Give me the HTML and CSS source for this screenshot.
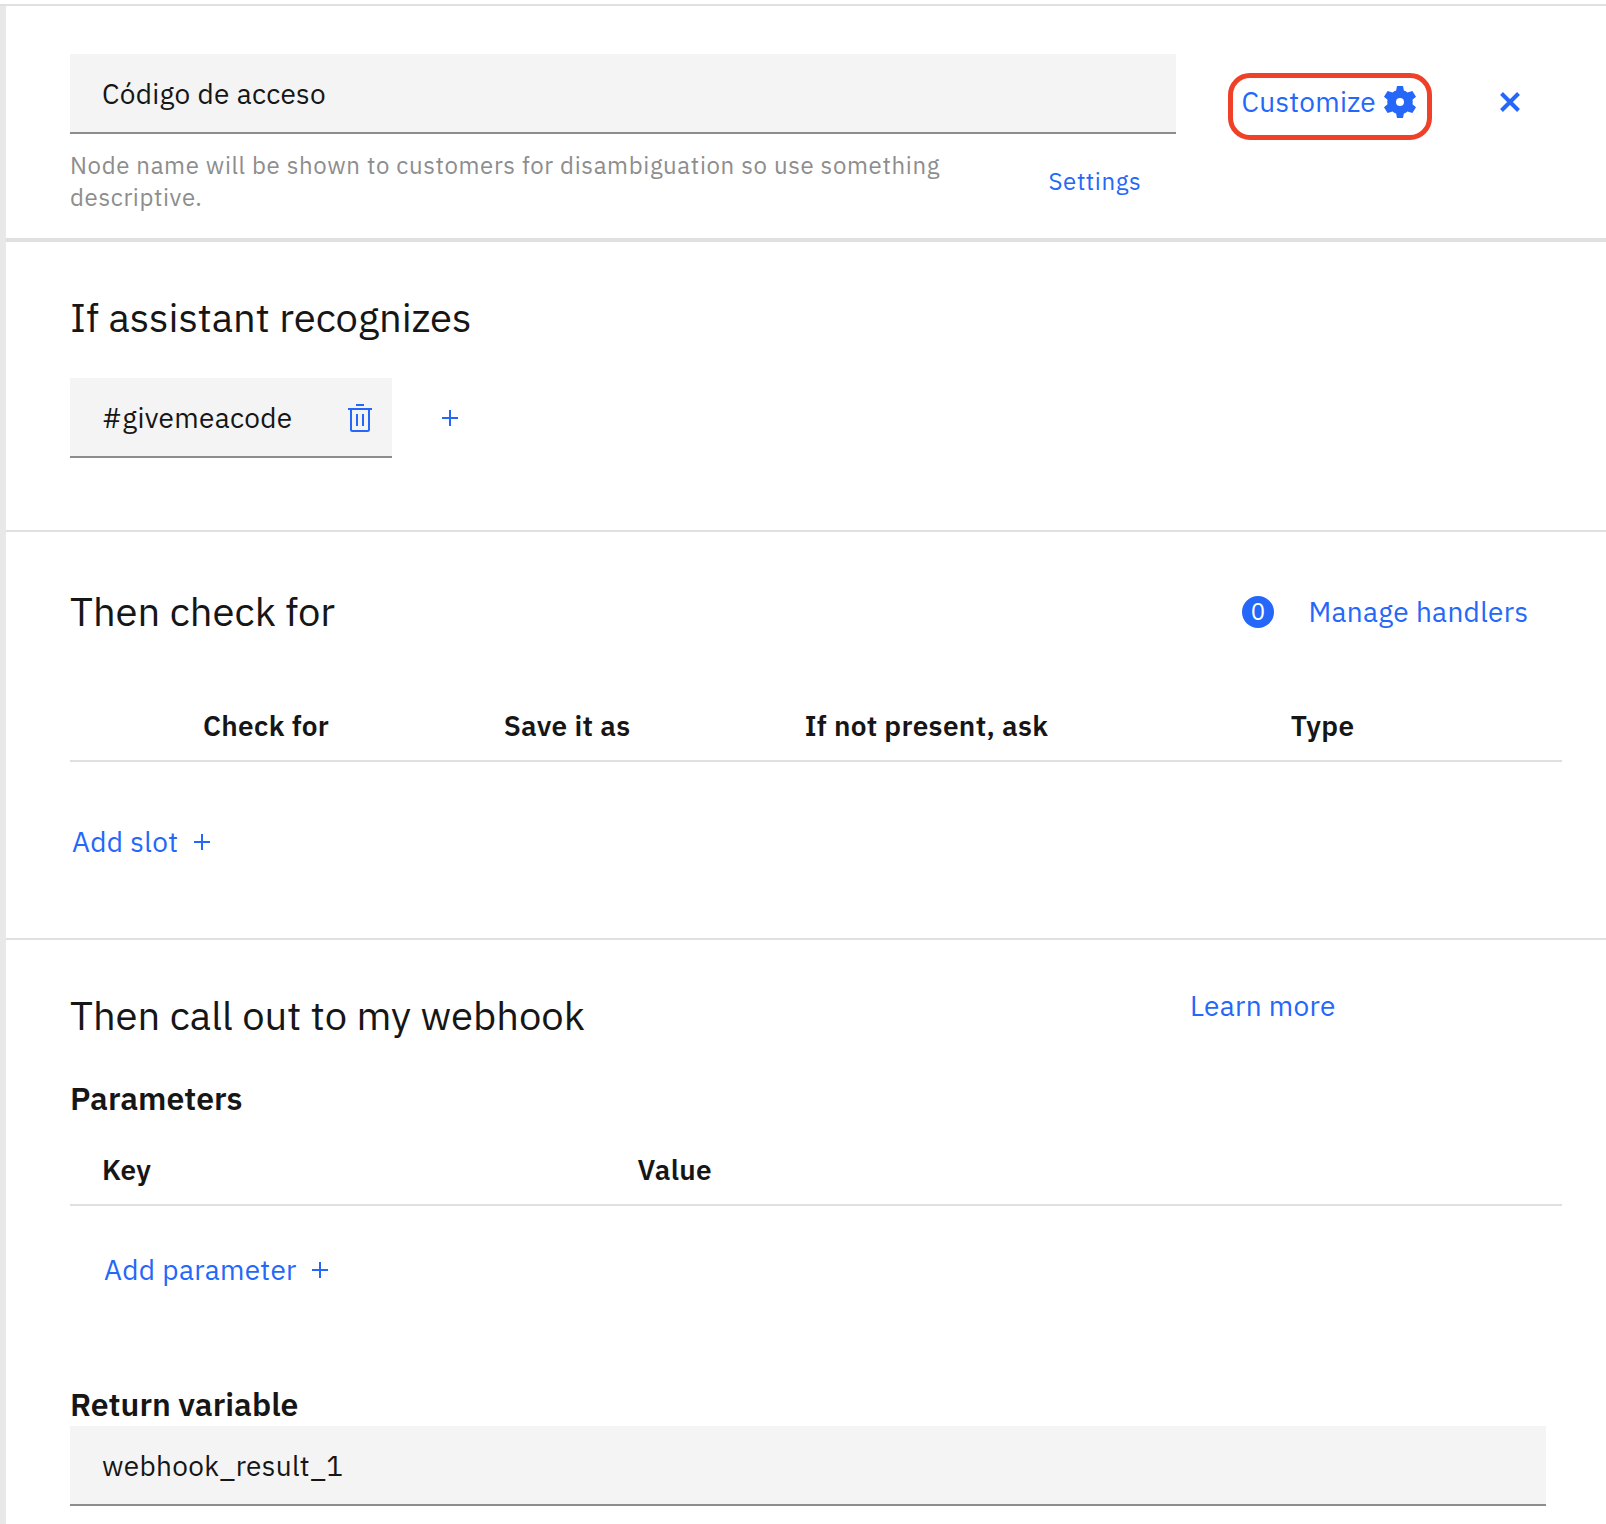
FILE: index.html
```
<!DOCTYPE html>
<html lang="es">
<head>
<meta charset="utf-8">
<title>Código de acceso</title>
<link rel="stylesheet" href="styles.css">
</head>
<body>
<div class="page">
<main class="panel">
  <header class="section node-header">
    <div class="name-column">
      <div class="field">Código de acceso</div>
      <div class="helper-row">
        <p class="helper">Node name will be shown to customers for disambiguation so use something descriptive.</p>
        <a class="settings">Settings</a>
      </div>
    </div>
    <div class="customize">
      <a class="link">Customize</a>
      <svg class="gear" viewBox="0 0 32 32" width="32" height="32"><path fill-rule="evenodd" d="M13 0h6l.9 4.600q2 .6 3.500 2l5-1.600L32 10.800l-3.500 3q.5 2.200 0 4.400l3.500 3L28.400 27l-5-1.600q-1.500 1.400-3.500 2L19 32h-6l-.9-4.600q-2-.6-3.500-2L3.600 27 0 21.200l3.500-3q-.5-2.200 0-4.400L0 10.800 3.600 5l5 1.600q1.500-1.400 3.500-2zM16 12a4 4 0 1 0 0 8 4 4 0 0 0 0-8z"/></svg>
    </div>
    <svg class="close" viewBox="0 0 20 20" width="20" height="20"><path d="M1.500 1.500l17 17M18.500 1.500l-17 17"/></svg>
  </header>

  <section class="section recognizes">
    <h2>If assistant recognizes</h2>
    <div class="conditions">
      <div class="field chip">
        <span>#givemeacode</span>
        <svg class="trash" viewBox="0 0 24 28" width="24" height="28"><path d="M8 0h8v2H8zM0 4h24v2H0zM8 10h2v12H8zM14 10h2v12h-2z"/><path class="can" d="M3 5v20.500Q3 27 4.500 27h15q1.500 0 1.500-1.500V5"/></svg>
      </div>
      <svg class="plus" viewBox="0 0 16 16" width="16" height="16"><path d="M7 0h2v7h7v2H9v7H7V9H0V7h7z"/></svg>
    </div>
  </section>

  <section class="section slots">
    <div class="title-row">
      <h2>Then check for</h2>
      <div class="handlers"><span class="count">0</span><a class="link manage">Manage handlers</a></div>
    </div>
    <div class="table-head slot-head">
      <span>Check for</span><span>Save it as</span><span>If not present, ask</span><span>Type</span>
    </div>
    <div class="add-row slot-add"><a class="link add-slot">Add slot</a><svg class="plus" viewBox="0 0 16 16" width="16" height="16"><path d="M7 0h2v7h7v2H9v7H7V9H0V7h7z"/></svg></div>
  </section>

  <section class="webhook">
    <div class="title-row">
      <h2>Then call out to my webhook</h2>
      <a class="link learn">Learn more</a>
    </div>
    <h3 class="h-params">Parameters</h3>
    <div class="table-head param-head"><span>Key</span><span>Value</span></div>
    <div class="add-row param-add"><a class="link add-param">Add parameter</a><svg class="plus" viewBox="0 0 16 16" width="16" height="16"><path d="M7 0h2v7h7v2H9v7H7V9H0V7h7z"/></svg></div>
    <h3 class="h-return">Return variable</h3>
    <div class="field result">webhook_result_1</div>
  </section>
</main>
</div>
</body>
</html>
```
FILE: styles.css
```
* { box-sizing: border-box; }
body { margin: 0; background: #fff; color: #161616; font-family: "IBM Plex Sans", "Open Sans", "Noto Sans", sans-serif; font-size: 28px; line-height: 37px; letter-spacing: .32px; }
h2, h3, p { margin: 0; }
svg { display: block; flex: none; fill: #2567f8; }
.page { height: 1524px; padding-top: 4px; overflow: hidden; }
.panel { height: 1520px; border-top: 2px solid #e0e0e0; background: linear-gradient(to right, #e8e8e8 6px, #fff 6px); padding-left: 6px; }
.section { border-bottom: 2px solid #e0e0e0; padding-left: 64px; }
.link, .settings { color: #2567f8; white-space: nowrap; }
.field { height: 80px; padding-left: 32px; line-height: 79px; background: #f4f4f4; border-bottom: 2px solid #8d8d8d; white-space: nowrap; }
h2 { font-size: 40px; line-height: 50px; font-weight: 400; letter-spacing: 0; white-space: nowrap; }
h3 { font-size: 32px; line-height: 40px; font-weight: 600; letter-spacing: 0; }
.node-header { display: flex; align-items: flex-start; height: 236px; padding-top: 48px; border-bottom-width: 4px; }
.name-column { width: 1106px; }
.helper-row { display: grid; grid-template-columns: 978.5px auto; margin-top: 15px; font-size: 24px; line-height: 32px; letter-spacing: .64px; }
.helper { color: #8d8d8d; padding-right: 70px; }
.settings { margin-top: 16px; }
.customize { display: flex; justify-content: space-between; width: 204px; height: 67px; margin: 19px 0 0 52px; padding: 5px 11px 0 8.5px; border: 5px solid #ee4128; border-radius: 22px; }
.gear { margin-top: 3px; }
.close { margin: 38px 0 0 68px; stroke: #2567f8; stroke-width: 4; }
.recognizes { height: 290px; padding-top: 50px; }
.conditions { display: flex; align-items: center; gap: 50px; margin-top: 36px; }
.chip { display: flex; justify-content: space-between; width: 322px; padding-right: 20px; }
.trash { margin-top: 26px; }
.can { fill: none; stroke: #2567f8; stroke-width: 2; }
.slots { height: 408px; padding-top: 54px; }
.title-row { display: flex; justify-content: space-between; align-items: flex-start; height: 50px; }
.handlers { display: flex; padding: 7px 80px 0 0; }
.count { width: 32px; height: 32px; margin: 3px 34.5px 0 0; border-radius: 50%; background: #2567f8; color: #fff; font-size: 24px; line-height: 30px; text-align: center; }
.manage { width: 217.5px; }
.table-head { display: grid; width: 1492px; border-bottom: 2px solid #e0e0e0; font-weight: 600; white-space: nowrap; }
.slot-head { grid-template-columns: 300.7px 301px 486px auto; height: 126px; padding: 71px 0 0 133px; }
.add-row { display: flex; align-items: flex-start; gap: 16px; }
.add-row .plus { margin-top: 11px; }
.slot-add { margin: 61px 0 0 2px; }
.add-slot { width: 106px; }
.add-param { width: 192px; }
.webhook { padding: 50px 0 0 64px; }
.learn { margin: -3px 270px 0 0; width: 146px; }
.h-params { margin-top: 38px; }
.param-head { grid-template-columns: 535.6px auto; height: 88px; padding: 33px 0 0 32px; }
.param-add { margin: 45px 0 0 34px; }
.h-return { margin: 96px 0 2px; }
.result { width: 1476px; }
```
